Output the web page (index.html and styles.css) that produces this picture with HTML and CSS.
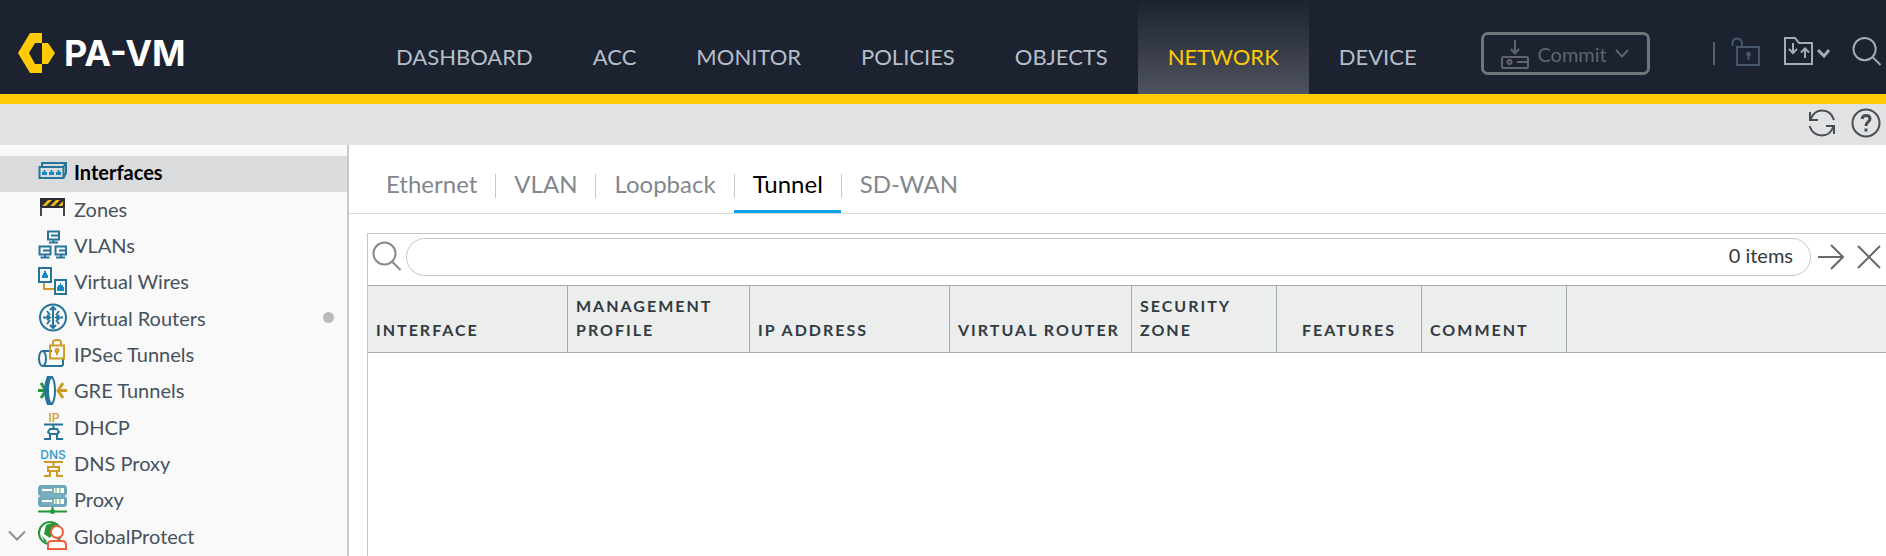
FILE: index.html
```
<!DOCTYPE html>
<html lang="en">
<head>
<meta charset="utf-8">
<title>PA-VM</title>
<link rel="stylesheet" href="styles.css">
</head>
<body>
<header class="topbar">
  <a class="brand" href="#">
    <svg class="brand-mark" viewBox="0 0 37 41" aria-hidden="true"><path d="M0 20 12 0H24V10H17L11 20 17 31H24V40H12Z"/><path d="M24 10H30L37 20 30 31H24Z"/></svg>
    <span>PA-VM</span>
  </a>
  <nav class="mainnav">
    <a href="#">DASHBOARD</a><a href="#">ACC</a><a href="#">MONITOR</a><a href="#">POLICIES</a><a href="#">OBJECTS</a><a href="#" class="active">NETWORK</a><a href="#">DEVICE</a>
  </nav>
  <button class="commit" type="button">
    <svg class="commit-icon" viewBox="0 0 28 30"><path d="M14 1V14M10 10 14 14.500 18 10M8 18H2.500Q1 18 1 19.500V27.500Q1 29 2.500 29H25.500Q27 29 27 27.500V19.500Q27 18 25.500 18H8M16 23H26"/><circle cx="8.500" cy="23" r="2"/></svg>
    <span>Commit</span>
    <svg class="commit-caret" viewBox="0 0 14 9"><path d="M1 1 7 7.500 13 1"/></svg>
  </button>
  <div class="tools">
    <span class="divider"></span>
    <button type="button" class="tool lock" aria-label="Locks"><svg viewBox="0 0 29 29"><path d="M1.500 9V6Q2 1.500 6 1.500T11 6V10M6 10H28V28H6Z"/><circle cx="17.500" cy="17" r="2.500" class="dot"/><path d="M17.500 17V23"/></svg></button>
    <button type="button" class="tool folder" aria-label="Configuration"><svg viewBox="0 0 47 29"><path d="M1 1H11L15 6H28V27H1ZM9 6V16M5 12 9 16 13 12M21 21V12M17 15.500 21 11.500 25 15.500"/><path class="heavy" d="M34 13 40 19 45 13"/></svg></button>
    <button type="button" class="tool find" aria-label="Search"><svg viewBox="0 0 30 30"><circle cx="12.500" cy="12.500" r="11.500"/><path d="M20.500 20.500 29 29"/></svg></button>
  </div>
</header>
<div class="subbar">
  <button type="button" class="tool" aria-label="Refresh"><svg viewBox="0 0 28 28"><path d="M2 3V11H10M2.500 10.500Q6 1.500 14 1.500 23 1.500 26 11M26 25V17H18M25.500 17.500Q22 26.500 14 26.500 5 26.500 1.500 17"/></svg></button>
  <button type="button" class="tool help" aria-label="Help"><svg viewBox="0 0 30 30"><circle cx="15" cy="15" r="13.500"/><path class="heavy" d="M11 11Q11.500 7.500 15 7.500 19 7.500 19 11C19 14 15 13.500 15 18"/><path class="heavy" d="M15 20.500V23.500"/></svg></button>
</div>
<div class="body">
  <nav class="sidebar">
    <ul class="tree">
      <li class="selected"><a href="#"><svg class="icon" viewBox="0 0 29 29"><path class="blue" d="M4 9V5H28V15L26 19M1.500 9H25.500V20H1.500ZM25.500 9 28 5"/><path class="fillbright" d="M4 17V14H5.500V12H7.500V14H9V17ZM11 17V14H12.500V12H14.500V14H16V17ZM18 17V14H19.500V12H21.500V14H23V17Z"/></svg>Interfaces</a></li>
      <li><a href="#"><svg class="icon" viewBox="0 0 29 29"><path fill="#292d33" d="M2 4H27V14H2Z"/><path d="M4 12 10 6H14L8 12ZM12 12 18 6H22L16 12ZM20 12 25 7V11L24 12Z" fill="#f0b91c"/><path d="M3 13V22M26 13V22" stroke="#444950" stroke-width="2"/></svg>Zones</a></li>
      <li><a href="#"><svg class="icon" viewBox="0 0 29 29"><g class="blue"><path d="M10 1.500H21V9.500H10ZM15.500 10V12.500M11 12.500H20M13 5.500H21"/><path d="M1.500 16.500H12.500V24.500H1.500ZM7 25V27.500M2.500 27.500H11.500M5 20.500H12M17.500 16.500H28V24.500H17.500ZM23 25V27.500M18 27.500H27M21 20.500H28"/></g></svg>VLANs</a></li>
      <li><a href="#"><svg class="icon" viewBox="0 0 29 29"><path class="gold" d="M6 16V22H16"/><path class="blue" d="M1 1H13V15H1ZM17 13H28V27H17Z"/><path class="fillbright" d="M4 11V8H5V6H6V4H8V6H9V8H10V11ZM19 24V20H20V18H22V16H23V18H25V20H26V24Z"/></svg>Virtual Wires</a></li>
      <li><a href="#"><svg class="icon" viewBox="0 0 29 29"><g class="blue"><circle cx="15" cy="14.500" r="13"/><path d="M15 4V25M5 14.500H12M18 14.500H25M12 7 15 4 18 7M12 22 15 25 18 22M9 8 12 12M21 8 18 12M9 21 12 17M21 21 18 17M9 12 12 14.500 9 17M21 12 18 14.500 21 17"/></g></svg>Virtual Routers</a><span class="status"></span></li>
      <li><a href="#"><svg class="icon" viewBox="0 0 29 29"><g class="blue"><path d="M4 12H14M25 20V25Q25 27 23 27H4"/><ellipse cx="4.500" cy="19.500" rx="3.500" ry="7.500"/></g><g class="gold"><path d="M12 6.500H26V19.500H12ZM15 6V3Q15 1 19 1T23 3V6"/><path d="M19 12V16"/><circle cx="19" cy="11.500" r="1.500"/></g></svg>IPSec Tunnels</a></li>
      <li><a href="#"><svg class="icon" viewBox="0 0 29 29"><path d="M0 14.500H8M3 7 8 14.500 3 22" class="green thick"/><path d="M29 14.500H19M25 7 20 14.500 25 22" class="gold thick"/><path d="M9 0H15V29H9Q6 22 6 14.500T9 0Z" fill="#27749b"/><ellipse cx="13.500" cy="14.500" rx="3.500" ry="13" fill="#fff" stroke="#27749b" stroke-width="2"/></svg>GRE Tunnels</a></li>
      <li><a href="#"><svg class="icon" viewBox="0 0 29 29"><text x="16" y="10" class="tag goldtext">IP</text><path class="blue" d="M6 12.500H25M15.500 13V17M12 17H19L21 20 19 22H12L10 20ZM12 22V27H6M19 22V27H25"/></svg>DHCP</a></li>
      <li><a href="#"><svg class="icon" viewBox="0 0 29 29"><text x="15" y="10" class="tag bluetext">DNS</text><path class="gold" d="M6 13H25M15.500 13V18M10 18H21V22H10ZM12 22V27H6M19 22V27H25"/></svg>DNS Proxy</a></li>
      <li><a href="#"><svg class="icon" viewBox="0 0 29 29"><g stroke="#6da5b9" stroke-width="3" fill="#fff"><rect x="1.500" y="1.500" width="26" height="8" rx="2"/><rect x="1.500" y="12.500" width="26" height="8" rx="2"/></g><path fill="#7aadc2" d="M3 3H16V9H3ZM3 14H16V20H3ZM3 9H26V13H3Z"/><path stroke="#fff" stroke-width="2" d="M4 5H14M4 16H14"/><path stroke="#a7d3a4" stroke-width="2" d="M18 3V8M22 3V8M18 14V19M22 14V19"/><path d="M0 26.500H29M14.500 22V27" class="green"/><circle cx="14.500" cy="26.500" r="2.500" fill="#269637"/></svg>Proxy</a></li>
      <li class="parent"><svg class="expander" viewBox="0 0 18 11"><path d="M1 1.500 9 9.500 17 1.500"/></svg><a href="#"><svg class="icon" viewBox="0 0 29 29"><circle cx="12" cy="12" r="11" fill="#fff" stroke="#269637" stroke-width="2"/><path d="M8 4 17 1 21 4 13 7 15 12 12 17 6 13ZM3 14 9 20 7 21Z" fill="#269637"/><path d="M10 28V23Q10 20 14 20H24Q28 20 28 24V28Z" fill="#fff" stroke="#ed603d" stroke-width="2"/><circle cx="19" cy="11" r="6" fill="#fff" stroke="#ed603d" stroke-width="2"/></svg>GlobalProtect</a></li>
    </ul>
  </nav>
  <main class="content">
    <nav class="tabs">
      <a href="#">Ethernet</a><a href="#">VLAN</a><a href="#">Loopback</a><a href="#" class="active">Tunnel</a><a href="#">SD-WAN</a>
    </nav>
    <section class="panel">
      <div class="searchrow">
        <label class="search-label" for="filter" aria-label="Filter"><svg class="search-icon" viewBox="0 0 30 30"><circle cx="12.500" cy="12.500" r="11"/><path d="M20 20.500 28.500 29"/></svg></label>
        <div class="searchbox"><input id="filter" type="text"><span>0 items</span></div>
        <button type="button" class="tool" aria-label="Apply filter"><svg viewBox="0 0 26 26"><path d="M0 13H25M13 1 25 13 13 25"/></svg></button>
        <button type="button" class="tool clear" aria-label="Clear filter"><svg viewBox="0 0 24 24"><path d="M1 1 23 23M23 1 1 23"/></svg></button>
      </div>
      <table class="grid">
        <colgroup><col class="wide"><col class="medium"><col class="wide"><col class="medium"><col class="narrow"><col class="narrow"><col class="narrow"><col></colgroup>
        <thead><tr><th>INTERFACE</th><th>MANAGEMENT PROFILE</th><th>IP ADDRESS</th><th>VIRTUAL ROUTER</th><th>SECURITY ZONE</th><th class="center">FEATURES</th><th>COMMENT</th><th></th></tr></thead>
      </table>
    </section>
  </main>
</div>
</body>
</html>
```
FILE: styles.css
```
* { box-sizing: border-box; }
body {
  margin: 0;
  min-height: 100vh;
  display: flex;
  flex-direction: column;
  font: 20px/24px Lato, "Open Sans", sans-serif;
  color: #46525c;
  background: #fff;
  overflow: hidden;
}
a { color: inherit; text-decoration: none; }
button { font: inherit; color: inherit; background: none; border: 0; padding: 0; }
svg { display: block; fill: none; flex: none; }

/* top bar */
.topbar {
  display: flex;
  height: 104px;
  background: #1c222f;
  border-bottom: 10px solid #ffcb06;
}
.brand {
  display: flex;
  align-items: center;
  gap: 9px;
  width: 366px;
  padding: 12px 0 0 18px;
  flex: none;
  font: 700 36px/40px Inter, sans-serif;
  color: #fff;
}
.brand-mark { width: 37px; height: 41px; fill: #ffcb06; }
.mainnav { display: flex; font-size: 22px; color: #b5bfca; }
.mainnav a { padding: 45px 30px 0; }
.mainnav .active {
  color: #ffcb06;
  background: linear-gradient(#1c222f, #4e535d);
}
.commit {
  display: flex;
  align-items: center;
  justify-content: center;
  gap: 8px;
  width: 169px;
  height: 43px;
  margin: 32px 0 0 34px;
  flex: none;
  border: 3px solid #71767d;
  border-radius: 7px;
  color: #60656d;
}
.commit svg { stroke: currentColor; stroke-width: 2; }
.commit-icon { width: 28px; height: 30px; }
.commit-caret { width: 14px; height: 9px; }

.tool svg { stroke: #4a4d50; stroke-width: 2; }
.tool .heavy { stroke-width: 3; }
.tools {
  display: flex;
  align-items: flex-start;
  margin-left: auto;
  padding: 37px 4px 0 0;
}
.tools .tool svg { stroke: #a3acb9; height: 29px; }
.divider { width: 2px; height: 23px; margin: 5px 16px 0 0; background: #586069; }
.lock svg { width: 29px; }
.tools .lock svg { stroke: #46566a; }
.lock .dot { fill: #46566a; stroke: none; }
.folder { margin-left: 24px; }
.folder svg { width: 47px; }
.find { margin-left: 21px; }
.find svg { width: 30px; }

.subbar {
  display: flex;
  align-items: center;
  justify-content: flex-end;
  gap: 15px;
  height: 41px;
  padding: 0 5px 3px 0;
  background: #e1e2e4;
}
.subbar svg { width: 28px; height: 28px; }
.subbar .help svg { width: 30px; height: 30px; }

/* body */
.body { display: flex; flex: 1; }
.sidebar {
  width: 349px;
  flex: none;
  padding-top: 11px;
  border-right: 2px solid #c6cacf;
  background: #f9f9f9;
}
.tree {
  display: grid;
  grid-auto-rows: 1fr;
  min-height: 400px;
  margin: 0;
  padding: 0;
  list-style: none;
}
.tree li {
  display: flex;
  align-items: center;
  justify-content: space-between;
  padding: 0 13px 4px 38px;
}
.tree a { display: flex; align-items: center; gap: 7px; }
.tree .selected { background: #dadbdd; color: #000; font-weight: 700; }
.tree .parent { justify-content: flex-start; gap: 12px; padding-left: 8px; }
.icon { width: 29px; height: 29px; overflow: visible; }
.expander { width: 18px; height: 11px; stroke: #8d9297; stroke-width: 2; }
.status { width: 11px; height: 11px; border-radius: 50%; background: #bababa; }
.blue { stroke: #27749b; stroke-width: 2; }
.gold { stroke: #d09a25; stroke-width: 2; }
.green { stroke: #269637; stroke-width: 2; }
.thick { stroke-width: 3; }
.fillbright { fill: #158ac2; }
.tag { font: 500 12px/12px Inter, sans-serif; text-anchor: middle; }
.goldtext { fill: #d09a25; }
.bluetext { fill: #3398c6; }

.content { flex: 1; min-width: 0; display: flex; flex-direction: column; }
.tabs {
  display: flex;
  height: 69px;
  padding: 27px 0 0 18px;
  border-bottom: 1px solid #d6d7d9;
  font-size: 24px;
  color: #82878d;
}
.tabs a {
  position: relative;
  padding: 0 18px 0 19px;
  border-bottom: 3px solid transparent;
}
.tabs a + a::before {
  content: "";
  position: absolute;
  left: 0;
  top: 2px;
  width: 1px;
  height: 24px;
  background: #c6cacd;
}
.tabs .active { color: #000; border-bottom-color: #0ba3e8; }
.panel {
  flex: 1;
  margin: 19px 0 0 18px;
  border: solid #c5c7ca;
  border-width: 1px 0 0 1px;
}
.searchrow { display: flex; align-items: center; padding: 4px 5px 9px 4px; }
.search-label { padding-bottom: 2px; }
.search-icon { width: 30px; height: 30px; stroke: #83898e; stroke-width: 2; }
.searchbox {
  display: flex;
  align-items: center;
  flex: 1;
  height: 38px;
  margin: 0 7px 0 4px;
  padding: 0 17px 4px 16px;
  border: 1px solid #c5c7ca;
  border-radius: 19px;
  color: #32383e;
}
.searchbox input { flex: 1; font: inherit; border: 0; outline: 0; background: none; }
.searchrow .tool svg { width: 26px; height: 26px; stroke: #66696c; }
.searchrow .clear { margin-left: 13px; }
.searchrow .clear svg { width: 24px; height: 24px; }

.grid { width: 100%; table-layout: fixed; border-collapse: separate; border-spacing: 0; }
.wide { width: 200px; }
.medium { width: 182px; }
.narrow { width: 145px; }
.grid th {
  height: 68px;
  padding: 7px 0 10px 8px;
  border: solid #a4a9ad;
  border-width: 1px 1px 1px 0;
  background: #ebeeed;
  color: #323a42;
  font-size: 16px;
  letter-spacing: 2px;
  text-align: left;
  vertical-align: bottom;
}
.grid th:last-child { border-right: 0; }
.grid .center { text-align: center; padding-left: 0; }
```
